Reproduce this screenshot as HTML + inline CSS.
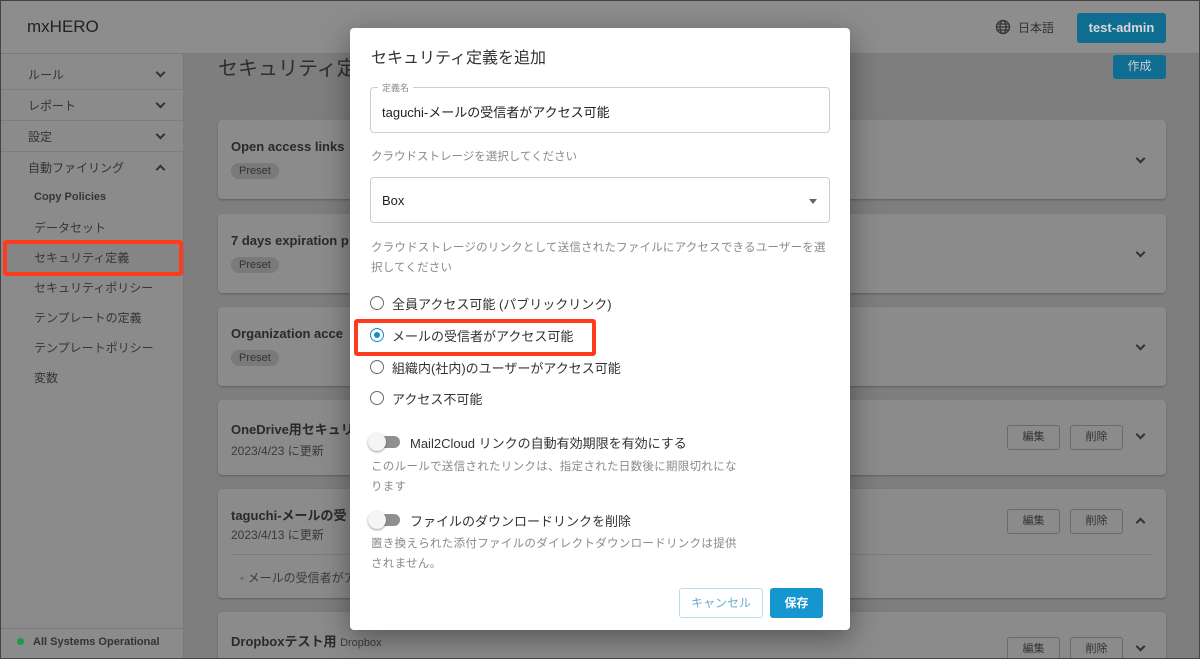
<!DOCTYPE html>
<html><head><meta charset="utf-8"><style>
*{box-sizing:border-box;margin:0;padding:0}
html{width:1200px;height:659px;overflow:hidden}
body{width:1200px;height:659px;overflow:hidden;position:relative;background:#7e7e7e;font-family:"Liberation Sans","Noto Sans CJK JP",sans-serif;color:#2b2b2b}
.a{position:absolute}
.hdr{left:0;top:0;width:1200px;height:54px;background:#8d8d8d;border-bottom:1px solid #7a7a7a}
.side{left:0;top:54px;width:184px;height:605px;background:#8b8b8b;border-right:1px solid #7a7a7a}
.si{position:absolute;left:0;width:184px;height:31px;border-bottom:1px solid #7d7d7d;font-size:12px;padding:7px 0 0 28px;color:#333}
.sub{position:absolute;left:34px;font-size:12px;color:#363636}
.chev{position:absolute;width:7px;height:7px;border-right:2px solid #333;border-bottom:2px solid #333;transform:rotate(45deg)}
.chevu{transform:rotate(-135deg)}
.card{position:absolute;left:218px;width:948px;background:#8b8b8b;border-radius:4px;box-shadow:0 1px 2px rgba(0,0,0,.25)}
.ct{position:absolute;left:13px;font-size:13px;font-weight:bold;color:#2a2a2a}
.pre{position:absolute;left:13px;background:#7a7a7a;border-radius:10px;font-size:11px;padding:2px 8px;color:#333}
.dt{position:absolute;left:13px;font-size:12px;color:#3a3a3a}
.ob{position:absolute;width:53px;height:25px;border:1px solid #6a6a6a;border-radius:3px;font-size:11px;text-align:center;line-height:23px;color:#333}
.dlg{left:350px;top:28px;width:500px;height:602px;background:#fff;border-radius:4px;box-shadow:0 8px 30px rgba(0,0,0,.4)}
.g{color:#8a8a8a;font-size:11.5px}
.rad{position:absolute;left:20px;width:14px;height:14px;border:1.5px solid #6b6b6b;border-radius:50%}
.rl{position:absolute;left:42px;font-size:13px;color:#333}
.tg{position:absolute;left:20px;width:30px;height:12px;border-radius:6px;background:#8f8f8f}
.tg:before{content:"";position:absolute;left:-2px;top:-3px;width:18px;height:18px;border-radius:50%;background:#f5f5f5;box-shadow:0 1px 2px rgba(0,0,0,.4)}
</style></head><body>
<div class="a hdr"><div class="a" style="left:27px;top:17px;font-size:17px;color:#222">mxHERO</div>
<svg class="a" style="left:995px;top:19px" width="16" height="16" viewBox="0 0 16 16" fill="none" stroke="#333" stroke-width="1.3"><circle cx="8" cy="8" r="6.5"/><ellipse cx="8" cy="8" rx="3" ry="6.5"/><path d="M1.5 8h13M2.5 5h11M2.5 11h11"/></svg>
<div class="a" style="left:1018px;top:19px;font-size:12px;color:#333">日本語</div>
<div class="a" style="left:1077px;top:13px;width:89px;height:30px;background:#0e6d91;border-radius:3px;color:#d8d8d8;font-size:13px;font-weight:bold;text-align:center;line-height:30px">test-admin</div></div>
<div class="a side">
<div class="si" style="top:5px">ルール<span class="chev" style="left:157px;top:10px"></span></div>
<div class="si" style="top:36px">レポート<span class="chev" style="left:157px;top:10px"></span></div>
<div class="si" style="top:67px">設定<span class="chev" style="left:157px;top:10px"></span></div>
<div class="si" style="top:98px;border:none">自動ファイリング<span class="chev chevu" style="left:157px;top:14px"></span></div>
<div class="sub" style="top:137px;font-weight:bold;font-size:11px">Copy Policies</div>
<div class="sub" style="top:165px">データセット</div>
<div class="a" style="left:3px;top:186px;width:180px;height:36px;border:4px solid #ff3b1f;border-radius:3px;background:#858585"></div>
<div class="sub" style="top:195px">セキュリティ定義</div>
<div class="sub" style="top:225px">セキュリティポリシー</div>
<div class="sub" style="top:255px">テンプレートの定義</div>
<div class="sub" style="top:285px">テンプレートポリシー</div>
<div class="sub" style="top:315px">変数</div>
<div class="a" style="left:0;top:574px;width:184px;border-top:1px solid #7a7a7a"></div>
<div class="a" style="left:17px;top:584px;width:7px;height:7px;border-radius:50%;background:#1e9a4a"></div>
<div class="a" style="left:33px;top:582px;font-size:11px;font-weight:bold;color:#333">All Systems Operational</div>
</div>
<div class="a" style="left:218px;top:52px;font-size:20px;color:#2e2e2e">セキュリティ定義</div>
<div class="a" style="left:1113px;top:55px;width:53px;height:24px;background:#0e6d91;border-radius:3px;color:#ccc;font-size:12px;text-align:center;line-height:22px">作成</div>
<div class="card" style="top:120px;height:79px"><div class="ct" style="top:19px">Open access links</div><div class="pre" style="top:43px">Preset</div><span class="chev" style="left:919px;top:35px"></span></div>
<div class="card" style="top:214px;height:79px"><div class="ct" style="top:19px">7 days expiration p</div><div class="pre" style="top:43px">Preset</div><span class="chev" style="left:919px;top:35px"></span></div>
<div class="card" style="top:307px;height:79px"><div class="ct" style="top:19px">Organization acce</div><div class="pre" style="top:43px">Preset</div><span class="chev" style="left:919px;top:35px"></span></div>
<div class="card" style="top:400px;height:75px"><div class="ct" style="top:19px">OneDrive用セキュリ</div><div class="dt" style="top:42px">2023/4/23 に更新</div><div class="ob" style="left:789px;top:25px">編集</div><div class="ob" style="left:852px;top:25px">削除</div><span class="chev" style="left:919px;top:31px"></span></div>
<div class="card" style="top:489px;height:109px"><div class="ct" style="top:16px">taguchi-メールの受</div><div class="dt" style="top:37px">2023/4/13 に更新</div><div class="a" style="left:13px;top:65px;width:922px;border-top:1px solid #7c7c7c"></div><div class="dt" style="top:80px;left:22px">◦ メールの受信者がア</div><div class="ob" style="left:789px;top:20px">編集</div><div class="ob" style="left:852px;top:20px">削除</div><span class="chev chevu" style="left:919px;top:30px"></span></div>
<div class="card" style="top:612px;height:47px;border-radius:4px 4px 0 0"><div class="ct" style="top:19px">Dropboxテスト用 <span style="font-weight:normal;font-size:11px;color:#3a3a3a">Dropbox</span></div><div class="ob" style="left:789px;top:25px">編集</div><div class="ob" style="left:852px;top:25px">削除</div><span class="chev" style="left:919px;top:31px"></span></div>
<div class="a dlg">
<div class="a" style="left:21px;top:16px;font-size:16px;color:#333">セキュリティ定義を追加</div>
<div class="a" style="left:20px;top:59px;width:460px;height:46px;border:1px solid #cfcfcf;border-radius:4px"></div>
<div class="a" style="left:28px;top:53px;padding:0 4px;background:#fff;font-size:9px;color:#888">定義名</div>
<div class="a" style="left:32px;top:74px;font-size:13px;color:#222">taguchi-メールの受信者がアクセス可能</div>
<div class="a g" style="left:21px;top:120px">クラウドストレージを選択してください</div>
<div class="a" style="left:20px;top:149px;width:460px;height:46px;border:1px solid #cfcfcf;border-radius:4px"></div>
<div class="a" style="left:32px;top:165px;font-size:13px;color:#222">Box</div>
<div class="a" style="left:459px;top:171px;border-left:4px solid transparent;border-right:4px solid transparent;border-top:5px solid #666"></div>
<div class="a g" style="left:21px;top:210px;width:460px;line-height:20px;letter-spacing:0.2px">クラウドストレージのリンクとして送信されたファイルにアクセスできるユーザーを選択してください</div>
<div class="rad" style="top:268px"></div><div class="rl" style="top:266px">全員アクセス可能 (パブリックリンク)</div>
<div class="a" style="left:4px;top:291px;width:242px;height:37px;border:4px solid #ff3b1f;border-radius:3px"></div>
<div class="rad" style="top:300px;border-color:#1a8ac0"><div style="position:absolute;left:2.5px;top:2.5px;width:6px;height:6px;border-radius:50%;background:#1a8ac0"></div></div><div class="rl" style="top:298px">メールの受信者がアクセス可能</div>
<div class="rad" style="top:332px"></div><div class="rl" style="top:330px">組織内(社内)のユーザーがアクセス可能</div>
<div class="rad" style="top:363px"></div><div class="rl" style="top:361px">アクセス不可能</div>
<div class="tg" style="top:408px"></div><div class="a" style="left:60px;top:405px;font-size:13px;color:#333">Mail2Cloud リンクの自動有効期限を有効にする</div>
<div class="a g" style="left:21px;top:429px;width:368px;line-height:20px;letter-spacing:0.3px">このルールで送信されたリンクは、指定された日数後に期限切れになります</div>
<div class="tg" style="top:486px"></div><div class="a" style="left:60px;top:483px;font-size:13px;color:#333">ファイルのダウンロードリンクを削除</div>
<div class="a g" style="left:21px;top:506px;width:368px;line-height:20px;letter-spacing:0.3px">置き換えられた添付ファイルのダイレクトダウンロードリンクは提供されません。</div>
<div class="a" style="left:329px;top:560px;width:84px;height:30px;border:1px solid #bcdcec;border-radius:3px;color:#6aaccd;font-size:12px;text-align:center;line-height:28px">キャンセル</div>
<div class="a" style="left:420px;top:560px;width:53px;height:30px;background:#1596cf;border-radius:3px;color:#fff;font-size:12px;font-weight:bold;text-align:center;line-height:30px">保存</div>
</div>
<div class="a" style="left:0;top:0;width:1200px;height:659px;border:1.5px solid #444;pointer-events:none"></div>
</body></html>
